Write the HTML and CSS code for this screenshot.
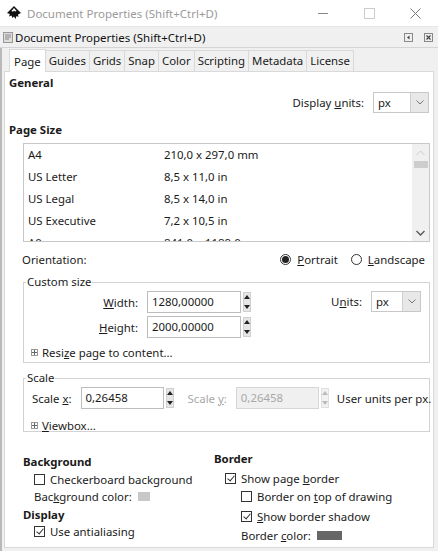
FILE: index.html
```html
<!DOCTYPE html>
<html>
<head>
<meta charset="utf-8">
<link rel="stylesheet" href="styles.css">
</head>
<body>
<div class="win">
  <div class="titlebar">
    <svg class="applogo" width="16" height="16" viewBox="0 0 16 16">
      <path d="M8 1 L15 8 L12 9.5 L12.5 12 L10.5 11 L9.5 14 L8 11.5 L6.5 13 L5.5 10.5 L3 11.5 L3.8 9 L1 8 Z" fill="#111"/>
      <path d="M8 3 L10.5 6 L9 6.5 L8 5.5 L7 6.8 L5.5 6 Z" fill="#fff"/>
    </svg>
    <span class="wtitle">Document Properties (Shift+Ctrl+D)</span>
    <div class="wctl">
      <span class="wbtn"><svg width="11" height="11" viewBox="0 0 11 11"><path d="M0 5.5 H10" stroke="#888" stroke-width="1"/></svg></span>
      <span class="wbtn"><svg width="11" height="11" viewBox="0 0 11 11"><rect x="0.5" y="0.5" width="10" height="10" fill="none" stroke="#ccc"/></svg></span>
      <span class="wbtn"><svg width="11" height="11" viewBox="0 0 11 11"><path d="M0.5 0.5 L10.5 10.5 M10.5 0.5 L0.5 10.5" stroke="#777" stroke-width="1"/></svg></span>
    </div>
  </div>
  <div class="panelhead">
    <svg class="phicon" width="10" height="11" viewBox="0 0 10 11"><rect x="0.5" y="0.5" width="9" height="10" fill="#ddd" stroke="#999"/><path d="M2 3 H8 M2 5 H8 M2 7 H6" stroke="#888"/></svg>
    <span class="phtitle">Document Properties (Shift+Ctrl+D)</span>
    <div class="phbtns">
      <span class="phbtn"><svg width="9" height="9" viewBox="0 0 9 9"><rect x="0.5" y="0.5" width="8" height="8" fill="#eee" stroke="#888"/><path d="M5.5 2.5 L3 4.5 L5.5 6.5 Z" fill="#444"/></svg></span>
      <span class="phbtn"><svg width="9" height="9" viewBox="0 0 9 9"><rect x="0.5" y="0.5" width="8" height="8" fill="#eee" stroke="#888"/><path d="M2.5 2.5 L6.5 6.5 M6.5 2.5 L2.5 6.5" stroke="#444" stroke-width="1.2"/></svg></span>
    </div>
  </div>
  <div class="dlg">
    <div class="tabs">
      <span class="tab active">Page</span>
      <span class="tab">Guides</span>
      <span class="tab">Grids</span>
      <span class="tab">Snap</span>
      <span class="tab">Color</span>
      <span class="tab">Scripting</span>
      <span class="tab">Metadata</span>
      <span class="tab">License</span>
    </div>
    <div class="page">
      <div class="h h-general">General</div>
      <div class="row-units">
        <span class="lbl">Display <u>u</u>nits:</span>
        <span class="combo combo-display"><span class="cval">px</span><span class="cbtn"><svg width="8" height="5" viewBox="0 0 8 5"><path d="M0.5 0.5 L4 4 L7.5 0.5" fill="none" stroke="#777"/></svg></span></span>
      </div>
      <div class="h h-pagesize">Page Size</div>
      <div class="list">
        <div class="rows">
          <div class="lrow"><span class="c1">A4</span><span>210,0 x 297,0 mm</span></div>
          <div class="lrow"><span class="c1">US Letter</span><span>8,5 x 11,0 in</span></div>
          <div class="lrow"><span class="c1">US Legal</span><span>8,5 x 14,0 in</span></div>
          <div class="lrow"><span class="c1">US Executive</span><span>7,2 x 10,5 in</span></div>
          <div class="lrow"><span class="c1">A0</span><span>841,0 x 1189,0 mm</span></div>
        </div>
        <div class="vscroll">
          <svg width="9" height="6" viewBox="0 0 9 6"><path d="M0.5 5 L4.5 1 L8.5 5" fill="none" stroke="#c8c8c8"/></svg>
          <span class="thumb"></span>
          <span class="vfill"></span>
          <svg width="9" height="6" viewBox="0 0 9 6"><path d="M0.5 1 L4.5 5 L8.5 1" fill="none" stroke="#555" stroke-width="1.3"/></svg>
        </div>
      </div>
      <div class="row-orient">
        <span>Orientation:</span>
        <span class="radios">
          <span class="radio on"></span><span class="rlbl"><u>P</u>ortrait</span>
          <span class="radio"></span><span class="rlbl"><u>L</u>andscape</span>
        </span>
      </div>
      <fieldset class="grp grp-custom">
        <legend>Custom size</legend>
        <div class="csz">
          <div class="csz-left">
            <div class="frow">
              <span class="flbl"><u>W</u>idth:</span>
              <span class="entry e-wide">1280,00000</span>
              <span class="spin"><i class="up"></i><i class="dn"></i></span>
            </div>
            <div class="frow">
              <span class="flbl"><u>H</u>eight:</span>
              <span class="entry e-wide">2000,00000</span>
              <span class="spin"><i class="up"></i><i class="dn"></i></span>
            </div>
          </div>
          <div class="csz-right">
            <span class="lbl">U<u>n</u>its:</span>
            <span class="combo combo-units"><span class="cval">px</span><span class="cbtn"><svg width="8" height="5" viewBox="0 0 8 5"><path d="M0.5 0.5 L4 4 L7.5 0.5" fill="none" stroke="#777"/></svg></span></span>
          </div>
        </div>
        <div class="expander"><span class="plus"></span><span>Resi<u>z</u>e page to content...</span></div>
      </fieldset>
      <fieldset class="grp grp-scale">
        <legend>Scale</legend>
        <div class="srow">
          <span class="slbl">Scale <u>x</u>:</span>
          <span class="entry e-scale">0,26458</span>
          <span class="spin"><i class="up"></i><i class="dn"></i></span>
          <span class="slbl dis sy">Scale <u>y</u>:</span>
          <span class="entry e-scale disabled">0,26458</span>
          <span class="spin disabled"><i class="up"></i><i class="dn"></i></span>
          <span class="uupx">User units per px.</span>
        </div>
        <div class="expander"><span class="plus"></span><span><u>V</u>iewbox...</span></div>
      </fieldset>
      <div class="cols">
        <div class="col col-left">
          <div class="h">Background</div>
          <div class="chk ind"><span class="box"></span><span>Checkerboard background</span></div>
          <div class="crow ind"><span>Bac<u>k</u>ground color:</span><span class="swatch sw-bg"></span></div>
          <div class="h">Display</div>
          <div class="chk ind"><span class="box on"></span><span>Use antialiasing</span></div>
        </div>
        <div class="col col-right">
          <div class="h">Border</div>
          <div class="chk ind"><span class="box on"></span><span>Show page <u>b</u>order</span></div>
          <div class="chk ind2"><span class="box"></span><span>Border on <u>t</u>op of drawing</span></div>
          <div class="chk ind2"><span class="box on"></span><span><u>S</u>how border shadow</span></div>
          <div class="crow ind2"><span>Border <u>c</u>olor:</span><span class="swatch sw-border"></span></div>
        </div>
      </div>
    </div>
  </div>
</div>
</body>
</html>
```
FILE: styles.css
```css
* { box-sizing: border-box; }
html, body { margin: 0; padding: 0; }
body {
  width: 438px;
  height: 551px;
  overflow: hidden;
  font-family: "Noto Sans", "Open Sans", sans-serif;
  font-size: 11.4px;
  color: #1a1a1a;
  background: #f0f0f0;
}
u { text-decoration: underline; text-underline-offset: 1px; }
.win { width: 438px; height: 551px; display: flex; flex-direction: column; }

.titlebar {
  height: 27px;
  background: #fff;
  display: flex;
  align-items: center;
  padding-left: 6px;
  border-bottom: 1px solid #e6e6e6;
}
.applogo { margin-right: 5px; }
.wtitle { color: #9a9a9a; font-size: 11.5px; flex: 1; white-space: nowrap; }
.wctl { display: flex; height: 27px; }
.wbtn { width: 46px; display: flex; align-items: center; justify-content: center; }

.panelhead {
  height: 21px;
  display: flex;
  align-items: center;
  padding-left: 3px;
  background: #f0f0f0;
  border-bottom: 1px solid #d4d4d4;
}
.phicon { margin-right: 2px; }
.phtitle { flex: 1; font-size: 11.5px; color: #111; white-space: nowrap; }
.phbtns { display: flex; gap: 11px; padding-right: 5px; }
.phbtn { display: flex; }

.dlg {
  flex: 1;
  display: flex;
  flex-direction: column;
  padding: 1px 4px 3px 2px;
  border-left: 2px solid #b9b9b9;
}
.tabs {
  height: 22px;
  display: flex;
  align-items: flex-end;
  padding-left: 5px;
}
.tab {
  height: 21px;
  line-height: 20px;
  padding: 0 3px;
  border: 1px solid #d9d9d9;
  border-left: none;
  border-bottom: none;
  background: #f0f0f0;
  color: #1a1a1a;
  white-space: nowrap;
}
.tab.active {
  height: 23px;
  background: #fff;
  border-left: 1px solid #d9d9d9;
  padding: 0 4px;
  margin-bottom: -1px;
  position: relative;
  z-index: 1;
  line-height: 23px;
}
.page {
  flex: 1;
  background: #fff;
  border: 1px solid #d9d9d9;
  padding: 2px 4px 0 4px;
  display: flex;
  flex-direction: column;
}
.h { font-weight: bold; height: 18px; line-height: 18px; white-space: nowrap; }
.row-units {
  height: 21px;
  display: flex;
  justify-content: flex-end;
  align-items: center;
}
.row-units .lbl { margin-right: 9px; }
.combo {
  height: 21px;
  display: flex;
  border: 1px solid #c8c8c8;
  background: #fff;
}
.combo .cval { flex: 1; padding-left: 4px; line-height: 19px; }
.combo .cbtn {
  width: 18px;
  background: #e8e8e8;
  border-left: 1px solid #cfcfcf;
  display: flex;
  align-items: center;
  justify-content: center;
}
.combo-display { width: 56px; }
.combo-units { width: 50px; }
.h-pagesize { margin-top: 8px; }

.list {
  margin: 4px -1px 0 14px;
  height: 99px;
  border: 1px solid #c8c8c8;
  display: flex;
  overflow: hidden;
}
.rows { flex: 1; overflow: hidden; }
.lrow { height: 22px; line-height: 22px; padding-left: 4px; display: flex; white-space: nowrap; }
.lrow .c1 { width: 136px; }
.vscroll {
  width: 17px;
  background: #f0f0f0;
  display: flex;
  flex-direction: column;
  align-items: center;
  padding: 6px 0 5px;
}
.vscroll .thumb { width: 14px; height: 7px; background: #cdcdcd; margin-top: 5px; }
.vscroll .vfill { flex: 1; }

.row-orient {
  margin-top: 8px;
  height: 18px;
  display: flex;
  align-items: center;
  justify-content: space-between;
  padding-left: 13px;
  padding-right: 4px;
}
.radios { display: flex; align-items: center; }
.radio {
  width: 11px; height: 11px; border-radius: 50%;
  border: 1px solid #333;
  display: inline-flex; align-items: center; justify-content: center;
  margin-right: 6px;
}
.radio.on::after { content: ""; width: 7px; height: 7px; border-radius: 50%; background: #222; }
.rlbl { margin-right: 13px; }
.rlbl:last-child { margin-right: 0; }

.grp {
  margin: 7px -1px 0 14px;
  border: 1px solid #d2d2d2;
  padding: 0;
  min-width: 0;
}
.grp legend { padding: 0 1px; margin-left: 2px; line-height: 14px; }
.grp-custom { height: 88px; }
.csz { display: flex; justify-content: space-between; padding-top: 2px; }
.csz-left { display: flex; flex-direction: column; gap: 3px; }
.frow { display: flex; align-items: center; }
.flbl { width: 123px; text-align: right; padding-right: 9px; white-space: nowrap; }
.entry {
  height: 22px;
  line-height: 20px;
  border: 1px solid #bdbdbd;
  padding-left: 4px;
  background: #fff;
  white-space: nowrap;
}
.e-wide { width: 94px; }
.spin {
  width: 8px; height: 20px;
  margin-left: 2px;
  display: flex; flex-direction: column; justify-content: space-between;
  align-items: center;
  background: #e6e6e6;
  border: 1px solid #cfcfcf;
  padding: 2px 0;
  flex: none;
}
.spin i { display: block; width: 0; height: 0; border-left: 3px solid transparent; border-right: 3px solid transparent; }
.spin .up { border-bottom: 4px solid #222; }
.spin .dn { border-top: 4px solid #222; }
.spin.disabled { background: #f2f2f2; border-color: #e0e0e0; }
.spin.disabled .up { border-bottom-color: #bbb; }
.spin.disabled .dn { border-top-color: #bbb; }
.csz-right { display: flex; align-items: flex-start; padding-right: 8px; }
.csz-right .lbl { line-height: 22px; margin-right: 9px; }
.expander { display: flex; align-items: center; height: 18px; padding-left: 7px; margin-top: 5px; white-space: nowrap; }
.plus {
  width: 7px; height: 7px; border: 1px solid #999; margin-right: 4px; flex: none;
  background:
    linear-gradient(#666,#666) center/5px 1px no-repeat,
    linear-gradient(#666,#666) center/1px 5px no-repeat;
}
.grp-scale { height: 61px; margin-top: 8px; }
.srow { display: flex; align-items: center; padding-left: 8px; padding-top: 2px; }
.slbl { margin-right: 9px; white-space: nowrap; flex: none; }
.dis { color: #a8a8a8; }
.sy { margin-left: 14px; }
.e-scale { width: 83px; flex: none; }
.entry.disabled { background: #f0f0f0; color: #a8a8a8; border-color: #d6d6d6; }
.uupx { margin-left: 8px; white-space: nowrap; }
.grp-scale .expander { margin-top: 7px; }

.cols { display: flex; margin-top: 21px; padding-left: 14px; }
.col { display: flex; flex-direction: column; }
.col-left { width: 191px; }
.col-left .h, .col-left .chk, .col-left .crow { height: 17.5px; line-height: 17.5px; }
.col-right { margin-top: -3px; }
.chk, .crow { height: 18px; display: flex; align-items: center; white-space: nowrap; }
.ind { padding-left: 11px; }
.ind2 { padding-left: 27px; }
.box {
  width: 11px; height: 11px; border: 1px solid #333; margin-right: 5px;
  display: inline-block; position: relative; flex: none;
}
.box.on::after {
  content: ""; position: absolute; left: 3px; top: 0px; width: 3px; height: 6px;
  border-right: 1px solid #333; border-bottom: 1px solid #333; transform: rotate(40deg);
}
.swatch { display: inline-block; margin-left: 6px; height: 9px; }
.sw-bg { width: 12px; background: #c8c8c8; }
.sw-border { width: 25px; background: #666; }
.col-right .chk:nth-child(2) { margin-top: 1px; }
.col-right .chk:nth-child(4) { margin-top: 2px; }
.col-right .crow { margin-top: 1px; }
```
